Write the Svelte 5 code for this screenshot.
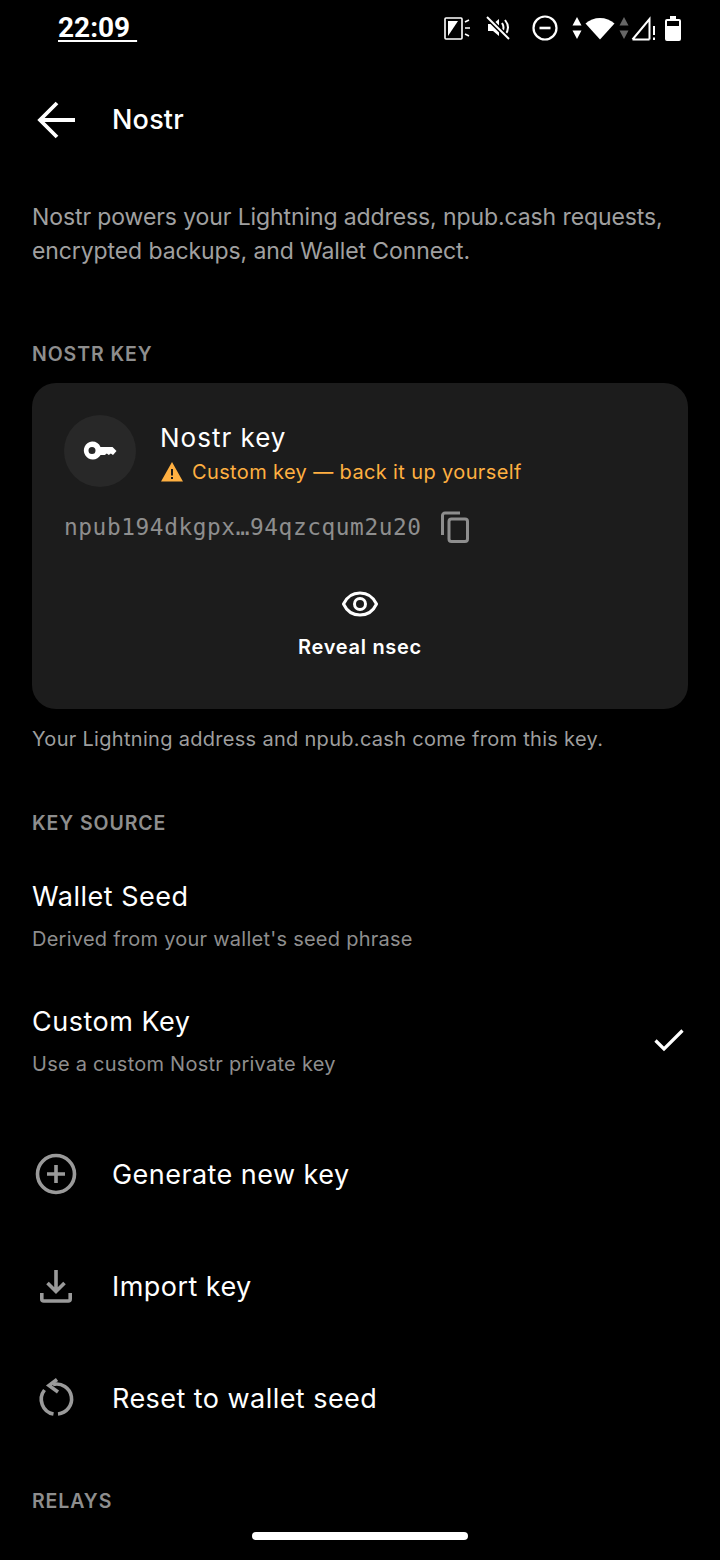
<script>
  const sources = [
    { title: "Wallet Seed", sub: "Derived from your wallet's seed phrase", checked: false },
    { title: "Custom Key", sub: "Use a custom Nostr private key", checked: true },
  ];
</script>

<div class="screen">
  <div class="status">
    <span class="time">22:09&nbsp;</span>
    <div class="status-icons">
      <svg class="s1" width="28" height="24" viewBox="0 0 28 24" fill="none" stroke="#fff" stroke-width="1.6">
        <rect x="1" y="2" width="17" height="21" rx="1" />
        <path d="M4 20V5h10z" fill="#fff" stroke="none" />
        <path d="M21 6l4-2M21 12h5M21 18l4 2" />
      </svg>
      <svg class="s2" width="26" height="26" viewBox="0 0 26 26" fill="none" stroke="#fff" stroke-width="2">
        <path d="M3 9h5l6-5v17l-6-5H3z" fill="#fff" stroke="none" />
        <path d="M17 8c2 3 2 6 0 9M20 5c4 5 4 10 0 15" />
        <path d="M1 1l24 24" stroke="#000" stroke-width="5" />
        <path d="M2 2l22 22" />
      </svg>
      <svg class="s3" width="26" height="26" viewBox="0 0 26 26" fill="none" stroke="#fff" stroke-width="2.2">
        <circle cx="13" cy="13" r="11.5" />
        <path d="M7.5 13h11" stroke-width="2.6" />
      </svg>
      <svg class="s4" width="10" height="24" viewBox="0 0 10 24" fill="#fff">
        <path d="M5 1l4.5 8.500h-9zM5 23l-4.500-8.500h9z" />
      </svg>
      <svg class="s5" width="30" height="24" viewBox="0 0 30 24" fill="#fff">
        <path d="M15 23.500L0.500 7.500C8 0 22 0 29.500 7.500z" />
      </svg>
      <svg class="s6" width="10" height="24" viewBox="0 0 10 24" fill="#666">
        <path d="M5 1l4.500 8.500h-9zM5 23l-4.500-8.500h9z" />
      </svg>
      <svg class="s7" width="26" height="26" viewBox="0 0 26 26" fill="none" stroke="#fff" stroke-width="2">
        <path d="M1.500 24.500h17M18.500 24.500V4L1.500 24.500" />
        <path d="M23 11v9M23 22.500v2.500" />
      </svg>
      <svg class="s8" width="16" height="26" viewBox="0 0 16 26" fill="#fff">
        <path d="M5 1h6v3h3a2 2 0 0 1 2 2v18a2 2 0 0 1-2 2H2a2 2 0 0 1-2-2V6a2 2 0 0 1 2-2h3z" />
        <rect x="2" y="6" width="12" height="5" fill="#000" />
      </svg>
    </div>
  </div>

  <header class="topbar">
    <svg width="40" height="40" viewBox="0 0 40 40" fill="none" stroke="#fff" stroke-width="3.800">
      <path d="M39 20H5M21 3L4 20l17 17" />
    </svg>
    <h1>Nostr</h1>
  </header>

  <p class="intro">Nostr powers your Lightning address, npub.cash requests, encrypted backups, and Wallet Connect.</p>

  <div class="section first">NOSTR KEY</div>

  <div class="card">
    <div class="card-head">
      <div class="avatar">
        <svg width="34" height="20" viewBox="0 0 34 20" fill="#fff">
          <path fill-rule="evenodd" d="M9 .500a9 9 0 0 1 8.500 5.500H29.500L33.500 10l-3.500 4-2.200-1.600-2 1.600-2-1.600-2 1.600h-4.200A9 9 0 1 1 9 .500zm0 5.600a3.500 3.500 0 1 0 0 7 3.500 3.500 0 0 0 0-7z" />
        </svg>
      </div>
      <div class="card-text">
        <div class="card-title">Nostr key</div>
        <div class="warn">
          <svg width="22" height="20" viewBox="0 0 22 20">
            <path d="M11 0l11 19.500H0z" fill="#ffb041" />
            <path d="M10 7h2v6.500h-2zM10 15h2v2h-2z" fill="#1c1c1c" />
          </svg>
          <span>Custom key — back it up yourself</span>
        </div>
      </div>
    </div>
    <div class="npub">
      <span>npub194dkgpx…94qzcqum2u20</span>
      <svg width="28" height="32" viewBox="0 0 28 32" fill="none" stroke="#8e8e8e" stroke-width="3">
        <path d="M19 2H4a2.500 2.500 0 0 0-2.500 2.500V24" />
        <rect x="8" y="8" width="18.500" height="22.500" rx="2.500" />
      </svg>
    </div>
    <div class="reveal">
      <svg width="36" height="26" viewBox="0 0 36 26" fill="none" stroke="#fff" stroke-width="3">
        <path d="M1.500 13C5 5.500 11 2 18 2s13 3.500 16.500 11C31 20.500 25 24 18 24S5 20.500 1.500 13z" />
        <circle cx="18" cy="13" r="5.500" />
      </svg>
      <span>Reveal nsec</span>
    </div>
  </div>
  <p class="hint">Your Lightning address and npub.cash come from this key.</p>

  <div class="section">KEY SOURCE</div>

  <div class="sources">
    {#each sources as s}
      <div class="source">
        <div>
          <div class="source-title">{s.title}</div>
          <div class="source-sub">{s.sub}</div>
        </div>
        {#if s.checked}
          <svg width="30" height="24" viewBox="0 0 30 24" fill="none" stroke="#fff" stroke-width="3.200">
            <path d="M1.500 12.500L10 21 28.500 2.500" />
          </svg>
        {/if}
      </div>
    {/each}
  </div>

  <div class="actions">
    <div class="action">
      <span class="action-icon">
        <svg width="44" height="44" viewBox="0 0 44 44" fill="none" stroke="#9a9a9a" stroke-width="3.600">
          <circle cx="22" cy="22" r="18.500" />
          <path d="M22 13v18M13 22h18" />
        </svg>
      </span>
      <span>Generate new key</span>
    </div>
    <div class="action">
      <span class="action-icon">
        <svg width="44" height="44" viewBox="0 0 44 44" fill="none" stroke="#9a9a9a" stroke-width="3.600">
          <path d="M22 6v21M13.500 19l8.500 8.500 8.500-8.500" />
          <path d="M7.800 29v6a2 2 0 0 0 2 2h24.400a2 2 0 0 0 2-2v-6" />
        </svg>
      </span>
      <span>Import key</span>
    </div>
    <div class="action">
      <span class="action-icon">
        <svg width="44" height="44" viewBox="0 0 44 44" fill="none" stroke="#9a9a9a" stroke-width="3.600">
          <path d="M19 8.500A15 15 0 1 1 24 38" />
          <path d="M19.500 38A15 15 0 0 1 10.500 14" />
          <path d="M23 3.500L15 9.500l9 6.500" />
        </svg>
      </span>
      <span>Reset to wallet seed</span>
    </div>
  </div>

  <div class="section relays">RELAYS</div>
  <div class="home-bar"></div>
</div>

<style>
  :global(body) {
    background: #000;
  }

  .screen {
    position: relative;
    width: 720px;
    height: 1560px;
    overflow: hidden;
    background: #000;
    color: #fff;
    font-family: Inter, "Liberation Sans", sans-serif;
  }

  .status {
    height: 56px;
    display: flex;
    align-items: center;
    justify-content: space-between;
    padding: 0 39px 0 58px;
    box-sizing: border-box;
  }

  .time {
    font-family: Roboto, sans-serif;
    font-size: 28px;
    font-weight: 700;
    margin-top: -2px;
    text-decoration: underline;
    text-underline-offset: 3px;
    text-decoration-thickness: 2px;
  }

  .status-icons {
    display: flex;
    align-items: center;
  }
  .status-icons svg {
    display: block;
  }
  .s1 { margin-right: 13px; }
  .s2 { margin-right: 21px; }
  .s3 { margin-right: 14px; }
  .s4 { margin-right: 3px; }
  .s5 { margin-right: 4px; }
  .s6 { margin-right: 2px; }
  .s7 { margin-right: 8px; }

  .topbar {
    height: 128px;
    display: flex;
    align-items: center;
    padding-left: 36px;
    box-sizing: border-box;
  }
  .topbar h1 {
    margin: -2px 0 0 36px;
    font-size: 27px;
    font-weight: 500;
    letter-spacing: 0.2px;
  }

  .intro {
    margin: 17px 32px 0;
    font-size: 23px;
    line-height: 33.500px;
    letter-spacing: -0.1px;
    color: #a0a0a0;
  }

  .section {
    margin: 0 32px;
    font-size: 19.500px;
    font-weight: 600;
    letter-spacing: 0.9px;
    color: #8e8e8e;
  }
  .first {
    margin-top: 74px;
  }

  .card {
    margin: 17px 32px 0;
    height: 326px;
    box-sizing: border-box;
    padding: 32px;
    background: #1c1c1c;
    border-radius: 24px;
  }
  .card-head {
    display: flex;
    align-items: center;
    gap: 24px;
  }
  .card-text {
    margin-top: 2px;
  }
  .avatar {
    width: 72px;
    height: 72px;
    border-radius: 50%;
    background: #282828;
    display: flex;
    align-items: center;
    justify-content: center;
  }
  .card-title {
    font-size: 26px;
    line-height: 34px;
    letter-spacing: 1px;
  }
  .warn {
    display: flex;
    align-items: center;
    gap: 9px;
    margin-top: 5px;
    color: #ffb041;
    font-size: 20px;
    letter-spacing: 0.37px;
  }
  .warn svg {
    margin-left: 1px;
  }
  .npub {
    display: flex;
    align-items: center;
    gap: 19px;
    margin-top: 24px;
    font-family: "DejaVu Sans Mono", "Liberation Mono", monospace;
    font-size: 22.800px;
    letter-spacing: 0.58px;
    color: #8e8e8e;
  }
  .reveal {
    display: flex;
    flex-direction: column;
    align-items: center;
    gap: 18px;
    margin-top: 48px;
    font-size: 20px;
    font-weight: 600;
    letter-spacing: 0.7px;
  }

  .hint {
    margin: 18px 32px 0;
    font-size: 20px;
    letter-spacing: 0.3px;
    color: #9e9e9e;
  }
  .hint + .section {
    margin-top: 60px;
  }

  .sources {
    margin-top: 30px;
  }
  .source {
    height: 135px;
    padding: 15px 32px 0;
    box-sizing: border-box;
    display: flex;
    align-items: center;
    justify-content: space-between;
  }
  .source:first-child {
    height: 100px;
    padding-top: 0;
  }
  .source svg {
    margin-right: 4px;
  }
  .source-title {
    font-size: 27px;
    letter-spacing: 0.5px;
  }
  .source-sub {
    margin-top: 14px;
    font-size: 20px;
    letter-spacing: 0.25px;
    color: #8e8e8e;
  }

  .actions {
    margin-top: 18px;
  }
  .action {
    height: 112px;
    display: flex;
    align-items: center;
    padding-left: 34px;
    gap: 34px;
    font-size: 27px;
    letter-spacing: 0.45px;
  }
  .action-icon {
    display: flex;
    width: 44px;
  }

  .relays {
    margin-top: 35px;
  }

  .home-bar {
    position: absolute;
    left: 252px;
    bottom: 20px;
    width: 216px;
    height: 8px;
    border-radius: 4px;
    background: #fff;
  }
</style>
